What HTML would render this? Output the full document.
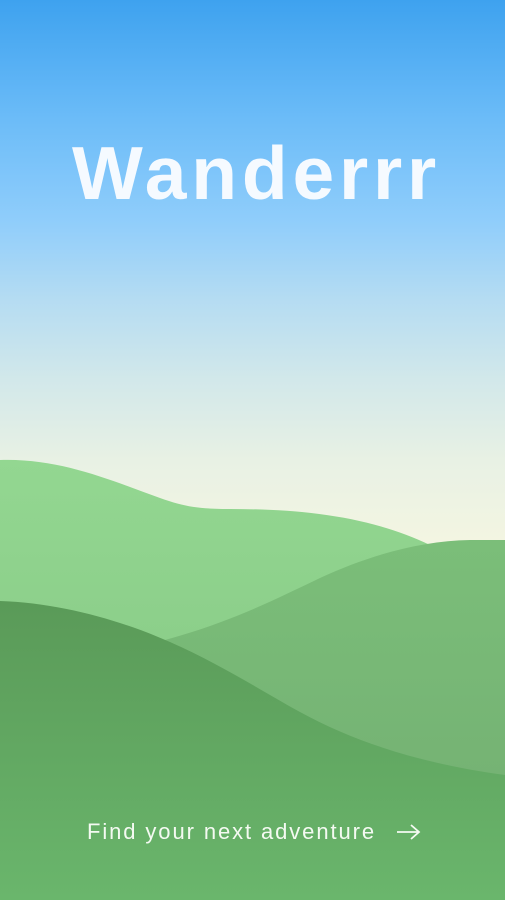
<!DOCTYPE html>
<html><head><meta charset="utf-8"><style>
html,body{margin:0;padding:0;width:505px;height:900px;overflow:hidden}
body{position:relative;background:linear-gradient(180deg,#3ea2ef 0px,#6cbcf8 120px,#8fcdfb 220px,#b5dcf2 300px,#d2e8ea 380px,#e8f1e4 460px,#f3f5e2 540px,#f3f5e2 900px);font-family:"Liberation Sans",sans-serif}
h1{position:absolute;left:0;width:505px;top:128px;margin:0;text-align:center;color:#f5faff;font-size:75px;font-weight:bold;letter-spacing:4.8px;line-height:90px;padding-left:4px}
svg{position:absolute;left:0;top:0}
.cta{position:absolute;left:87px;top:819px;color:#f4faf2;font-size:22px;letter-spacing:1.9px;white-space:nowrap}
</style></head><body>
<h1>Wanderrr</h1>
<svg width="505" height="900" viewBox="0 0 505 900">
<defs>
<linearGradient id="g1" x1="0" y1="0" x2="0" y2="1"><stop offset="0" stop-color="#93d791"/><stop offset="1" stop-color="#82c380"/></linearGradient>
<linearGradient id="g2" x1="0" y1="0" x2="0" y2="1"><stop offset="0" stop-color="#7bbe79"/><stop offset="1" stop-color="#72ad71"/></linearGradient>
<linearGradient id="g3" x1="0" y1="0" x2="0" y2="1"><stop offset="0" stop-color="#5a9a58"/><stop offset="1" stop-color="#6ab66c"/></linearGradient>
</defs>
<path d="M0 460 C60 458 110 480 160 498 C185 507 200 509 230 509 C300 509 370 516 430 545 L505 560 L505 900 L0 900 Z" fill="url(#g1)"/>
<path d="M165 640 C230 622 270 602 320 578 C370 555 420 541 470 540 L505 540 L505 900 L165 900 Z" fill="url(#g2)"/>
<path d="M0 601 C60 603 120 620 170 642 C220 664 260 690 300 712 C360 745 430 765 505 775 L505 900 L0 900 Z" fill="url(#g3)"/>
</svg>
<div class="cta">Find your next adventure</div>
<svg style="left:396px;top:822px" width="26" height="20" viewBox="0 0 26 20"><path d="M1 10 H23 M15 3 L23 10 L15 17" stroke="#f4faf2" stroke-width="1.8" fill="none"/></svg>
</body></html>
